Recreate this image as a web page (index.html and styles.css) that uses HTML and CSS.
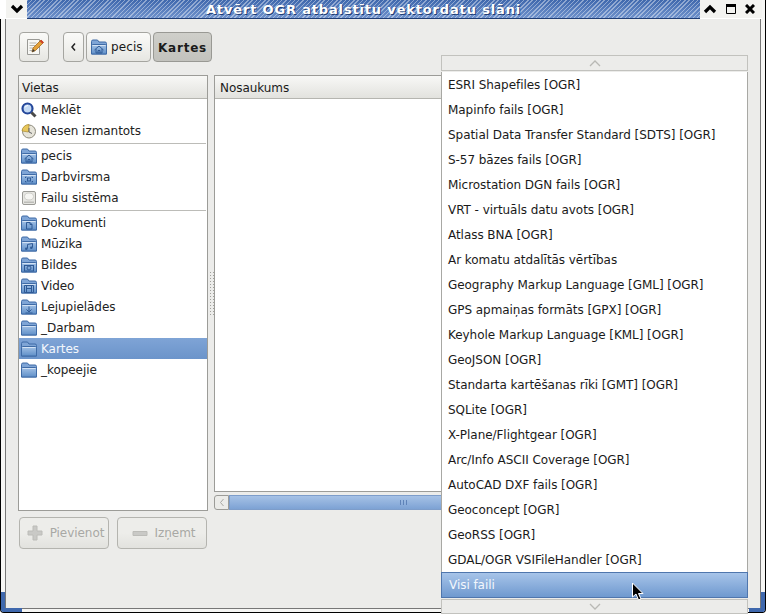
FILE: index.html
```html
<!DOCTYPE html>
<html lang="lv">
<head>
<meta charset="UTF-8">
<title>Atvērt OGR atbalstītu vektordatu slāni</title>
<link rel="stylesheet" href="styles.css">
</head>
<body>
<svg class="defs" width="0" height="0">
    <defs>
        <linearGradient id="folderFill" x1="0" y1="0" x2="0" y2="1">
            <stop offset="0" stop-color="#a4c2e6"/>
            <stop offset="1" stop-color="#5f8fc8"/>
        </linearGradient>
        <symbol id="folder" viewBox="0 0 16 16">
            <path d="M.5 15V2.500q0-1.500 1.500-1.500h4.500L8 3h6q1.500 0 1.500 1.500V15z" fill="#7fa5d6" stroke="#3f6ba6"/>
            <path d="M.5 15V6.500q0-1 1-1h13q1 0 1 1V15z" fill="url(#folderFill)" stroke="#3f6ba6"/>
            <path d="M1.500 6.500h13" stroke="#d3e2f4"/>
        </symbol>
    </defs>
</svg>

<div class="window">
    <div class="titlebar">
        <div class="title-btns title-btns-left">
            <svg width="14" height="10" viewBox="0 0 14 10"><path d="M2 2l5 5 5-5" fill="none" stroke="#000" stroke-width="3.200"/></svg>
        </div>
        <div class="title-text">Atvērt OGR atbalstītu vektordatu slāni</div>
        <div class="title-btns title-btns-right">
            <svg width="14" height="10" viewBox="0 0 14 10"><path d="M2 8l5-5 5 5" fill="none" stroke="#000" stroke-width="3.200"/></svg>
            <svg width="10" height="10" viewBox="0 0 10 10"><path d="M.5.5h9v9h-9z" fill="none" stroke="#000"/><path d="M0 0h10v3H0z"/></svg>
            <svg width="10" height="10" viewBox="0 0 10 10"><path d="M1 1l8 8M9 1l-8 8" stroke="#000" stroke-width="3"/></svg>
        </div>
    </div>

    <div class="dialog">
        <div class="toolbar">
            <button class="btn btn-edit" type="button">
                <svg width="20" height="20" viewBox="0 0 20 20">
                    <path d="M3.500 2.500h12v15h-12z" fill="#f7f7f4" stroke="#9a9a96"/>
                    <path d="M5.500 6h7M5.500 8.500h6M5.500 11h5M5.500 13.500h4" stroke="#b5b5b0"/>
                    <path d="M8 15l1-4 8-8 2.500 2.500-8 8z" fill="#e2a13a" stroke="#a5681c" stroke-width=".8"/>
                    <path d="M16.500 3.500L19 6" stroke="#d0402a" stroke-width="2"/>
                    <path d="M8 15l1-3 2 2z" fill="#3a3a3a"/>
                </svg>
            </button>
            <div class="path-bar">
                <button class="btn btn-back" type="button">
                    <svg width="7" height="10" viewBox="0 0 7 10"><path d="M5 1.500L2 5l3 3.500" fill="none" stroke="#222" stroke-width="1.500"/></svg>
                </button>
                <button class="btn btn-path" type="button">
                    <svg class="icon"><use href="#folder"/><path d="M3.500 11L8 7l4.500 4M5 10v4h6v-4M7 14v-2.500h2V14" fill="none" stroke="#2f5a96"/></svg>
                    pecis
                </button>
                <button class="btn btn-current" type="button">Kartes</button>
            </div>
        </div>

        <div class="panes">
            <div class="places">
                <div class="col-head">Vietas</div>
                <div class="place">
                    <svg class="icon" viewBox="0 0 16 16">
                        <circle cx="6.500" cy="6.500" r="5" fill="#c4daf4" stroke="#24479a" stroke-width="2.200"/>
                        <path d="M10.500 10.500l4 4" stroke="#4a4a4a" stroke-width="3"/>
                        <path d="M4 5.500q1-2 3-2" stroke="#fff" fill="none"/>
                    </svg>
                    Meklēt
                </div>
                <div class="place">
                    <svg class="icon" viewBox="0 0 16 16">
                        <circle cx="8" cy="8.500" r="6.500" fill="#e6e4da" stroke="#8d8a7c"/>
                        <path d="M1 8a7 7 0 0 1 7-6.500L7.500 9z" fill="#e8c75c" stroke="#a98a2c" stroke-width=".7"/>
                        <path d="M8 5v4l3 1.500" fill="none" stroke="#666"/>
                    </svg>
                    Nesen izmantots
                </div>
                <div class="place-sep"></div>
                <div class="place">
                    <svg class="icon"><use href="#folder"/><path d="M3.500 11L8 7l4.500 4M5 10v4h6v-4M7 14v-2.500h2V14" fill="none" stroke="#2f5a96"/></svg>
                    pecis
                </div>
                <div class="place">
                    <svg class="icon"><use href="#folder"/><path d="M4.500 9V8h1M10.500 8h1v1M4.500 12v1h1M10.500 13h1v-1" fill="none" stroke="#2f5a96"/><rect x="6.500" y="9" width="3" height="3" fill="none" stroke="#2f5a96"/></svg>
                    Darbvirsma
                </div>
                <div class="place">
                    <svg class="icon" viewBox="0 0 16 16">
                        <rect x="1.500" y="1.500" width="13" height="13" rx="1.500" fill="#e6e6e2" stroke="#9a9a96"/>
                        <path d="M3 11.500h10v1.500H3z" fill="#bcbcb8"/>
                        <ellipse cx="8" cy="6.500" rx="4.500" ry="3.500" fill="#f6f6f3" stroke="#cfcfcb"/>
                    </svg>
                    Failu sistēma
                </div>
                <div class="place-sep"></div>
                <div class="place">
                    <svg class="icon"><use href="#folder"/><path d="M5.500 7.500h3.500l2 2v4.500h-5.500zM9 7.500v2h2" fill="none" stroke="#2f5a96"/></svg>
                    Dokumenti
                </div>
                <div class="place">
                    <svg class="icon"><use href="#folder"/><path d="M6.500 12.500V8.500l5-1v4" fill="none" stroke="#2f5a96"/><circle cx="5.300" cy="12.700" r="1.300" fill="#2f5a96"/><circle cx="10.300" cy="11.700" r="1.300" fill="#2f5a96"/></svg>
                    Mūzika
                </div>
                <div class="place">
                    <svg class="icon"><use href="#folder"/><rect x="3.500" y="8.500" width="9" height="5.500" fill="none" stroke="#2f5a96"/><circle cx="8" cy="11" r="2" fill="none" stroke="#2f5a96"/></svg>
                    Bildes
                </div>
                <div class="place">
                    <svg class="icon"><use href="#folder"/><path d="M3.500 7.500h9v7h-9zM5.500 7.500v7M10.500 7.500v7M5.500 10.500h5" fill="none" stroke="#2f5a96"/></svg>
                    Video
                </div>
                <div class="place">
                    <svg class="icon"><use href="#folder"/><path d="M8 7.500v5M5.500 10.500L8 13l2.500-2.500M4.500 14h7" fill="none" stroke="#2f5a96"/></svg>
                    Lejupielādes
                </div>
                <div class="place">
                    <svg class="icon"><use href="#folder"/></svg>
                    _Darbam
                </div>
                <div class="place place-on">
                    <svg class="icon"><use href="#folder"/></svg>
                    Kartes
                </div>
                <div class="place">
                    <svg class="icon"><use href="#folder"/></svg>
                    _kopeejie
                </div>
            </div>

            <div class="grip"><div class="grip-dots"></div></div>

            <div class="files">
                <div class="files-box">
                    <div class="col-head">Nosaukums</div>
                </div>
                <div class="hscroll">
                    <div class="scroll-btn">
                        <svg width="6" height="9" viewBox="0 0 6 9"><path d="M4.500 1L1.500 4.500l3 3.500" fill="none" stroke="#a8a8a4"/></svg>
                    </div>
                    <div class="scroll-thumb"><span class="thumb-lines"></span></div>
                </div>
            </div>
        </div>

        <div class="place-btns">
            <button class="btn btn-off" type="button">
                <svg width="16" height="16" viewBox="0 0 16 16"><path d="M6 1h4v5h5v4h-5v5H6v-5H1V6h5z" fill="#c9c9c6" stroke="#bcbcb8"/></svg>
                Pievienot
            </button>
            <button class="btn btn-off" type="button">
                <svg width="16" height="16" viewBox="0 0 16 16"><path d="M1 6.500h14v4H1z" fill="#c9c9c6" stroke="#bcbcb8"/></svg>
                Izņemt
            </button>
        </div>
    </div>

    <div class="corner corner-left"></div>
    <div class="corner corner-right"></div>
</div>

<div class="filter-menu">
    <div class="menu-arrow">
        <svg width="12" height="7" viewBox="0 0 12 7"><path d="M1 6l5-5 5 5" fill="none" stroke="#b8b8b4" stroke-width="1.300"/></svg>
    </div>
    <div class="menu-list">
        <div class="menu-item">ESRI Shapefiles [OGR]</div>
        <div class="menu-item">Mapinfo fails [OGR]</div>
        <div class="menu-item">Spatial Data Transfer Standard [SDTS] [OGR]</div>
        <div class="menu-item">S-57 bāzes fails [OGR]</div>
        <div class="menu-item">Microstation DGN fails [OGR]</div>
        <div class="menu-item">VRT - virtuāls datu avots [OGR]</div>
        <div class="menu-item">Atlass BNA [OGR]</div>
        <div class="menu-item">Ar komatu atdalītās vērtības</div>
        <div class="menu-item">Geography Markup Language [GML] [OGR]</div>
        <div class="menu-item">GPS apmaiņas formāts [GPX] [OGR]</div>
        <div class="menu-item">Keyhole Markup Language [KML] [OGR]</div>
        <div class="menu-item">GeoJSON [OGR]</div>
        <div class="menu-item">Standarta kartēšanas rīki [GMT] [OGR]</div>
        <div class="menu-item">SQLite [OGR]</div>
        <div class="menu-item">X-Plane/Flightgear [OGR]</div>
        <div class="menu-item">Arc/Info ASCII Coverage [OGR]</div>
        <div class="menu-item">AutoCAD DXF fails [OGR]</div>
        <div class="menu-item">Geoconcept [OGR]</div>
        <div class="menu-item">GeoRSS [OGR]</div>
        <div class="menu-item">GDAL/OGR VSIFileHandler [OGR]</div>
        <div class="menu-item menu-item-on">Visi faili</div>
    </div>
    <div class="menu-arrow menu-arrow-down">
        <svg width="12" height="7" viewBox="0 0 12 7"><path d="M1 1l5 5 5-5" fill="none" stroke="#b8b8b4" stroke-width="1.300"/></svg>
    </div>
</div>

<svg class="cursor" width="13" height="19" viewBox="0 0 13 19">
    <path d="M1.500 1v14l3.500-3 2.500 6 2.500-1-2.500-5.500h4.500z" fill="#000" stroke="#fff"/>
</svg>
</body>
</html>
```

FILE: styles.css
```css
html, body {
    margin: 0;
    padding: 0;
    background: #fff;
}
body {
    position: relative;
    width: 766px;
    height: 614px;
    overflow: hidden;
    font-family: "DejaVu Sans", sans-serif;
    font-size: 12px;
    letter-spacing: -0.05px;
    color: #1a1a1a;
}
.defs {
    position: absolute;
}
.icon {
    width: 16px;
    height: 16px;
    flex: none;
}

/* window frame */
.window {
    position: relative;
    display: flex;
    flex-direction: column;
    box-sizing: border-box;
    width: 766px;
    height: 613px;
    background: #f6f6f4;
    border: solid #000;
    border-width: 0 1px 1px 1px;
    border-radius: 0 0 4px 4px;
}
.titlebar {
    display: flex;
    align-items: stretch;
    flex: none;
    height: 19px;
    margin: 0 3px 0 -1px;
    background: #fff;
}
.title-btns {
    display: flex;
    align-items: center;
    flex: none;
    height: 18px;
    background: #f3f3f0;
}
.title-btns-left {
    justify-content: center;
    width: 21px;
    margin-left: 6px;
}
.title-btns-right {
    gap: 9px;
    width: 59px;
    padding-left: 3px;
}
.title-text {
    flex: 1;
    height: 18px;
    line-height: 19px;
    text-align: center;
    font-weight: bold;
    font-size: 13px;
    letter-spacing: 0.84px;
    color: #fff;
    text-shadow: 1px 1px 0 #1f3d75;
    border-bottom: 1px solid #1f3d75;
    background:
        repeating-linear-gradient(135deg, rgba(255, 255, 255, 0.4) 0 1px, rgba(255, 255, 255, 0) 1px 3px),
        linear-gradient(#3f68ad, #6f92cc);
}
.dialog {
    display: flex;
    flex-direction: column;
    flex: 1;
    box-sizing: border-box;
    margin: 0 4px 3px 4px;
    padding: 13px 12px 0 12px;
    background: #ececea;
    border: solid #777;
    border-width: 0 1px 1px 1px;
}
.corner {
    position: absolute;
    bottom: 0;
    height: 20px;
    box-sizing: border-box;
    border-bottom: 4px solid #3f68ad;
}
.corner-left {
    left: 0;
    width: 21px;
    border-left: 4px solid #3f68ad;
    border-bottom-left-radius: 3px;
}
.corner-right {
    right: 0;
    width: 16px;
    border-right: 4px solid #3f68ad;
    border-bottom-right-radius: 3px;
}

/* buttons */
.btn {
    display: flex;
    align-items: center;
    justify-content: center;
    box-sizing: border-box;
    padding: 0;
    font: inherit;
    letter-spacing: inherit;
    color: inherit;
    border: 1px solid #a5a5a0;
    border-radius: 4px;
    background: linear-gradient(#fafaf8, #f1f1ee 50%, #e6e6e2);
}
.toolbar {
    display: flex;
    flex: none;
    height: 30px;
    margin-left: 1px;
    gap: 14px;
}
.btn-edit {
    width: 30px;
}
.path-bar {
    display: flex;
    gap: 2px;
}
.btn-back {
    width: 21px;
}
.btn-path {
    justify-content: flex-start;
    gap: 4px;
    width: 65px;
    padding-left: 4px;
    letter-spacing: 0.1px;
}
.btn-current {
    width: 59px;
    padding-top: 1px;
    font-weight: bold;
    letter-spacing: 0.8px;
    background: linear-gradient(#cfcfca, #c2c2bd);
    border-color: #999994;
}

/* panes */
.panes {
    display: flex;
    flex: none;
    height: 436px;
    margin-top: 13px;
}
.places {
    flex: none;
    box-sizing: border-box;
    width: 190px;
    background: #fff;
    border: 1px solid #9c9c98;
}
.col-head {
    box-sizing: border-box;
    height: 23px;
    line-height: 25px;
    padding-left: 3px;
    background: linear-gradient(#f8f8f6, #e2e2de);
    border-bottom: 1px solid #b5b5b0;
}
.place {
    display: flex;
    align-items: center;
    gap: 4px;
    height: 21px;
    padding-left: 2px;
    color: #222;
}
.place-sep {
    height: 1px;
    margin: 2px 1px 1px 1px;
    background: #bcbcb8;
}
.place-on {
    color: #f3f7fc;
    background: linear-gradient(#7fa4d6, #6b94ca);
}
.grip {
    display: flex;
    align-items: center;
    flex: none;
    width: 6px;
}
.grip-dots {
    width: 6px;
    height: 45px;
    margin-left: 1px;
    background-image: radial-gradient(#a0a09c 0.8px, transparent 1px);
    background-size: 3px 3px;
}
.files {
    display: flex;
    flex-direction: column;
    flex: 1;
}
.files-box {
    box-sizing: border-box;
    height: 417px;
    background: #fff;
    border: 1px solid #9c9c98;
}
.files-box .col-head {
    padding-left: 5px;
}
.hscroll {
    display: flex;
    height: 15px;
    margin-top: 3px;
}
.scroll-btn {
    display: flex;
    align-items: center;
    justify-content: center;
    flex: none;
    box-sizing: border-box;
    width: 15px;
    background: #ecece9;
    border: 1px solid #9c9c98;
    border-radius: 3px 0 0 3px;
}
.scroll-thumb {
    flex: 1;
    box-sizing: border-box;
    padding: 4px 0 0 170px;
    border: 1px solid #7d9dca;
    background: linear-gradient(#a6c2e6, #7da2d4);
}
.thumb-lines {
    display: block;
    width: 7px;
    height: 5px;
    background: repeating-linear-gradient(90deg, #5f83b8 0 1px, transparent 1px 3px);
}
.place-btns {
    display: flex;
    flex: none;
    gap: 8px;
    height: 32px;
    margin: 6px 0 0 1px;
}
.btn-off {
    gap: 7px;
    width: 90px;
    padding-left: 3px;
    color: #a8a8a4;
    border-color: #b4b4af;
    background: linear-gradient(#ededea, #ededea 50%, #e2e2de);
}

/* filter combo popup */
.filter-menu {
    position: absolute;
    left: 441px;
    top: 55px;
    width: 307px;
}
.menu-arrow {
    display: flex;
    align-items: center;
    justify-content: center;
    box-sizing: border-box;
    height: 16px;
    background: #ececea;
    border: 1px solid #c2c2be;
}
.menu-arrow-down {
    height: 15px;
    margin-top: 1px;
}
.menu-list {
    box-sizing: border-box;
    height: 526px;
    margin-top: 1px;
    background: #fff;
    border: solid #a8a8a4;
    border-width: 0 1px;
}
.menu-item {
    box-sizing: border-box;
    height: 25px;
    padding: 0 6px;
    line-height: 26px;
    white-space: nowrap;
}
.menu-item-on {
    color: #f3f7fc;
    margin: 0 -1px;
    padding-left: 7px;
    height: 26px;
    line-height: 24px;
    border: 1px solid #4f76ad;
    background: linear-gradient(#a7c4e9, #6f99cf);
}
.cursor {
    position: absolute;
    left: 631px;
    top: 582px;
}
```
